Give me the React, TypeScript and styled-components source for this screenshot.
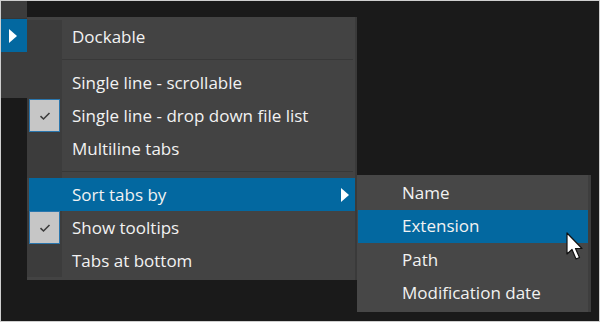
import styled, { createGlobalStyle } from "styled-components";

const GlobalStyle = createGlobalStyle`
  html, body {
    margin: 0;
    padding: 0;
    background: #1a1a1a;
  }
  * {
    box-sizing: border-box;
  }
`;

type Item = {
  label?: string;
  checked?: boolean;
  active?: boolean;
  submenu?: boolean;
  separator?: boolean;
};

const mainItems: Item[] = [
  { label: "Dockable" },
  { separator: true },
  { label: "Single line - scrollable" },
  { label: "Single line - drop down file list", checked: true },
  { label: "Multiline tabs" },
  { separator: true },
  { label: "Sort tabs by", active: true, submenu: true },
  { label: "Show tooltips", checked: true },
  { label: "Tabs at bottom" },
];

const subItems: Item[] = [
  { label: "Name" },
  { label: "Extension", active: true },
  { label: "Path" },
  { label: "Modification date" },
];

const Check = () => (
  <svg width="12" height="10" viewBox="0 0 12 10">
    <path d="M1.5 5.2 L4.5 8 L10.5 2" fill="none" stroke="#3c3c3c" strokeWidth="1.6" />
  </svg>
);

const Arrow = () => (
  <svg width="8" height="14" viewBox="0 0 8 14">
    <path d="M0 0 L8 7 L0 14 Z" fill="#ffffff" />
  </svg>
);

const Cursor = () => (
  <svg width="20" height="30" viewBox="0 0 20 30">
    <path
      d="M1 1 L1 22 L6 17.5 L10 27 L13.5 25.5 L9.5 16.5 L16 16.5 Z"
      fill="#ffffff"
      stroke="#111111"
      strokeWidth="1.2"
      strokeLinejoin="round"
    />
  </svg>
);

const App = (): JSX.Element => {
  return (
    <>
      <GlobalStyle />
      <Screen>
        <ParentStrip>
          <ParentTop />
          <ParentItem>
            <Arrow />
          </ParentItem>
        </ParentStrip>

        <Menu>
          {mainItems.map((item, i) =>
            item.separator ? (
              <Separator key={i}>
                <Gutter />
                <Line />
              </Separator>
            ) : (
              <Row key={i} $active={item.active}>
                <Gutter $active={item.active}>
                  {item.checked && (
                    <CheckBox>
                      <Check />
                    </CheckBox>
                  )}
                </Gutter>
                <Label>{item.label}</Label>
                {item.submenu && (
                  <SubArrow>
                    <Arrow />
                  </SubArrow>
                )}
              </Row>
            )
          )}
        </Menu>

        <SubMenu>
          {subItems.map((item, i) => (
            <SubRow key={i} $active={item.active}>
              {item.label}
            </SubRow>
          ))}
          <CursorWrap>
            <Cursor />
          </CursorWrap>
        </SubMenu>
      </Screen>
    </>
  );
};

const Screen = styled.div`
  width: 600px;
  height: 322px;
  display: flex;
  align-items: flex-start;
  background-color: #1a1a1a;
  border: 1px solid #cfcfcf;
  font-family: "Open Sans", "Noto Sans", sans-serif;
  overflow: hidden;
`;

const ParentStrip = styled.div`
  width: 26px;
  height: 97px;
  display: flex;
  flex-direction: column;
  background-color: #3c3c3c;
`;

const ParentTop = styled.div`
  height: 18px;
  border-bottom: 1px solid #363636;
`;

const ParentItem = styled.div`
  height: 33px;
  display: flex;
  align-items: center;
  justify-content: center;
  background-color: #0368a0;
  padding-right: 2px;
`;

const Menu = styled.div`
  width: 330px;
  margin-top: 16px;
  padding: 3px 0 3px 0;
  display: flex;
  flex-direction: column;
  background-color: #434343;
  border-right: 2px solid #3a3a3a;
`;

const Gutter = styled.div<{ $active?: boolean }>`
  width: ${(p) => (p.$active ? "33px" : "35px")};
  align-self: stretch;
  display: flex;
  align-items: center;
  justify-content: center;
  flex-shrink: 0;
  background-color: ${(p) => (p.$active ? "transparent" : "#3c3c3c")};
`;

const Row = styled.div<{ $active?: boolean }>`
  height: 33px;
  display: flex;
  align-items: center;
  background-color: ${(p) => (p.$active ? "#0368a0" : "transparent")};
  margin-left: ${(p) => (p.$active ? "2px" : "0")};
  color: #f2f2f2;
`;

const Label = styled.span`
  padding-left: 10px;
  padding-bottom: 1px;
  font-size: 17px;
  line-height: 1;
  white-space: nowrap;
`;

const SubArrow = styled.div`
  margin-left: auto;
  margin-right: 6px;
  display: flex;
`;

const CheckBox = styled.div`
  width: 31px;
  height: 33px;
  display: flex;
  align-items: center;
  justify-content: center;
  background-color: #c6c6c6;
  border: 1px solid #2a76ad;
`;

const Separator = styled.div`
  height: 13px;
  display: flex;
  align-items: center;
`;

const Line = styled.div`
  flex: 1;
  height: 1px;
  margin-right: 2px;
  background-color: #383838;
`;

const SubMenu = styled.div`
  width: 234px;
  margin-top: 174px;
  padding: 1px 0 2px 0;
  position: relative;
  display: flex;
  flex-direction: column;
  background-color: #474747;
  border-right: 3px solid #3e3e3e;
`;

const SubRow = styled.div<{ $active?: boolean }>`
  height: 33.5px;
  display: flex;
  align-items: center;
  padding-left: 44px;
  padding-bottom: 1px;
  font-size: 17px;
  color: #f2f2f2;
  white-space: nowrap;
  background-color: ${(p) => (p.$active ? "#0368a0" : "transparent")};
  margin-left: 1px;
`;

const CursorWrap = styled.div`
  position: absolute;
  left: 209px;
  top: 57px;
  display: flex;
`;

export default App;
